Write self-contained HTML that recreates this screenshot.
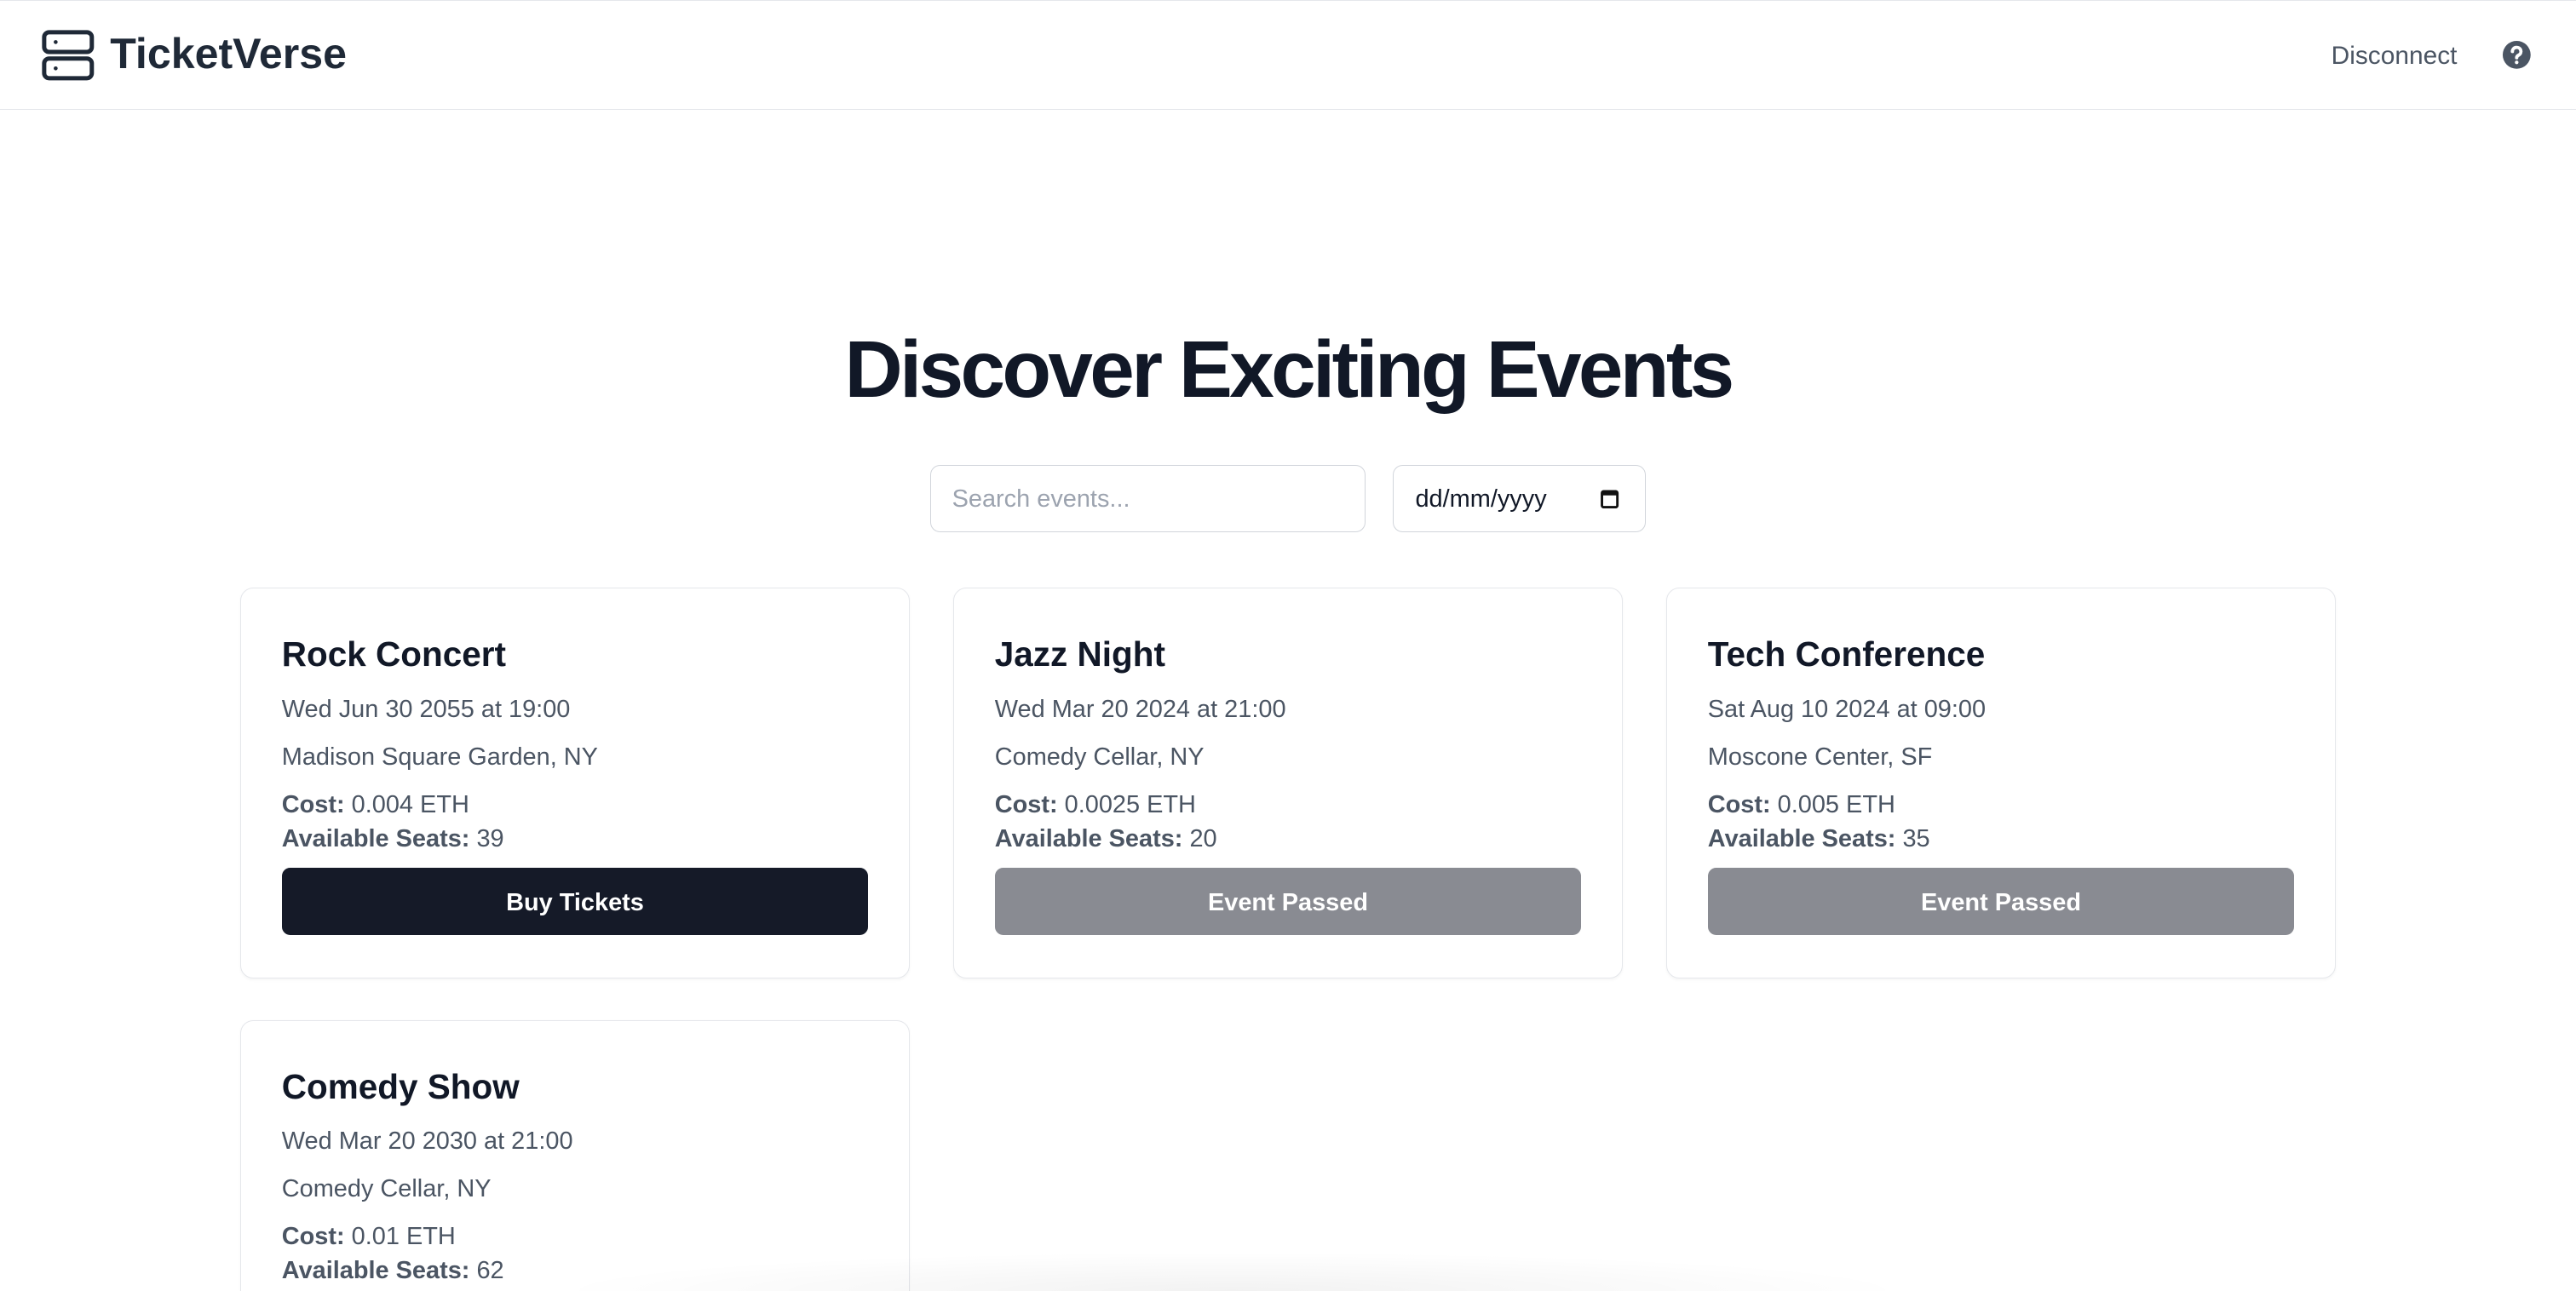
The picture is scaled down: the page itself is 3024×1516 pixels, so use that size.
<!DOCTYPE html>
<html><head><meta charset="utf-8"><style>
html,body{margin:0;padding:0;background:#fff;overflow:hidden;width:3024px;height:1516px}
#z{zoom:1.92857;width:1568px;height:786px;position:relative;font-family:"Liberation Sans",sans-serif;color:#111827;overflow:hidden}
.hdr{position:absolute;left:0;top:0;width:1568px;height:67px;border-top:1px solid #e5e7eb;border-bottom:1px solid #e5e7eb;box-sizing:border-box}
.logo{position:absolute;left:67px;top:17px;font-size:26px;font-weight:bold;color:#1f2937;letter-spacing:0}
.disc{position:absolute;left:1419px;top:25px;font-size:15.5px;color:#4b5563}
h1{position:absolute;left:0;width:1568px;top:197px;margin:0;text-align:center;font-size:49px;font-weight:bold;letter-spacing:-1.9px;color:#111827}
.inp{position:absolute;top:283px;height:41px;border:1px solid #d1d5db;border-radius:6px;box-sizing:border-box;font-size:15px}
.card{position:absolute;width:408px;height:238px;border:1px solid #e5e7eb;border-radius:8px;box-sizing:border-box;background:#fff;box-shadow:0 1px 2px rgba(0,0,0,.04)}
.card .t{position:absolute;left:25px;top:28px;font-size:21px;font-weight:bold;color:#111827}
.card .l{position:absolute;left:25px;font-size:15px;color:#4b5563}
.card .l b{color:#4b5563}
.btn{position:absolute;left:25px;top:170px;width:357px;height:41px;border-radius:5px;color:#fff;font-size:15px;font-weight:bold;text-align:center;line-height:43px}
.shadow{position:absolute;left:300px;top:760px;width:900px;height:26px;background:radial-gradient(ellipse at 50% 100%,rgba(0,0,0,.05),rgba(0,0,0,0) 65%)}
</style></head><body><div id="z">
<div class="hdr">
<svg style="position:absolute;left:25px;top:17px" width="33" height="32" viewBox="0 0 33 32" fill="none" stroke="#1f2937" stroke-width="2.6"><rect x="2" y="2" width="29" height="12" rx="3"/><rect x="2" y="18" width="29" height="12" rx="3"/><circle cx="9" cy="8" r="1.2" fill="#1f2937" stroke="none"/><circle cx="9" cy="24" r="1.2" fill="#1f2937" stroke="none"/></svg>
<div class="logo">TicketVerse</div>
<div class="disc">Disconnect</div>
<svg style="position:absolute;left:1523px;top:24px" width="18" height="18" viewBox="0 0 18 18"><circle cx="9" cy="9" r="8.5" fill="#4b5563"/><path d="M6.4 7a2.6 2.5 0 1 1 3.8 2.2c-.8.4-1.2.8-1.2 1.6" stroke="#fff" stroke-width="2" fill="none" stroke-linecap="round"/><circle cx="9" cy="13.6" r="1.1" fill="#fff"/></svg>
</div>
<h1>Discover Exciting Events</h1>
<div class="inp" style="left:566px;width:265px;color:#9ca3af;padding:12px 13px">Search events...</div>
<div class="inp" style="left:848px;width:154px;color:#111827;padding:12px 13px">dd/mm/yyyy
<svg style="position:absolute;left:126px;top:14px" width="11" height="12" viewBox="0 0 11 12"><rect x="0.8" y="1.5" width="9.4" height="9.7" rx="1" fill="none" stroke="#111" stroke-width="1.5"/><rect x="0.8" y="1.5" width="9.4" height="2.5" fill="#111"/></svg></div>

<div class="card" style="left:146px;top:358px"><div class="t">Rock Concert</div>
<div class="l" style="top:65px">Wed Jun 30 2055 at 19:00</div><div class="l" style="top:94px">Madison Square Garden, NY</div>
<div class="l" style="top:123px"><b>Cost:</b> 0.004 ETH</div><div class="l" style="top:144px"><b>Available Seats:</b> 39</div>
<div class="btn" style="background:#151a28">Buy Tickets</div></div>

<div class="card" style="left:580px;top:358px"><div class="t">Jazz Night</div>
<div class="l" style="top:65px">Wed Mar 20 2024 at 21:00</div><div class="l" style="top:94px">Comedy Cellar, NY</div>
<div class="l" style="top:123px"><b>Cost:</b> 0.0025 ETH</div><div class="l" style="top:144px"><b>Available Seats:</b> 20</div>
<div class="btn" style="background:#898b92">Event Passed</div></div>

<div class="card" style="left:1014px;top:358px"><div class="t">Tech Conference</div>
<div class="l" style="top:65px">Sat Aug 10 2024 at 09:00</div><div class="l" style="top:94px">Moscone Center, SF</div>
<div class="l" style="top:123px"><b>Cost:</b> 0.005 ETH</div><div class="l" style="top:144px"><b>Available Seats:</b> 35</div>
<div class="btn" style="background:#898b92">Event Passed</div></div>

<div class="card" style="left:146px;top:621px;height:165px;border-bottom:none;border-radius:8px 8px 0 0"><div class="t">Comedy Show</div>
<div class="l" style="top:65px">Wed Mar 20 2030 at 21:00</div><div class="l" style="top:94px">Comedy Cellar, NY</div>
<div class="l" style="top:123px"><b>Cost:</b> 0.01 ETH</div><div class="l" style="top:144px"><b>Available Seats:</b> 62</div>
</div>
<div class="shadow"></div>
</div></body></html>
